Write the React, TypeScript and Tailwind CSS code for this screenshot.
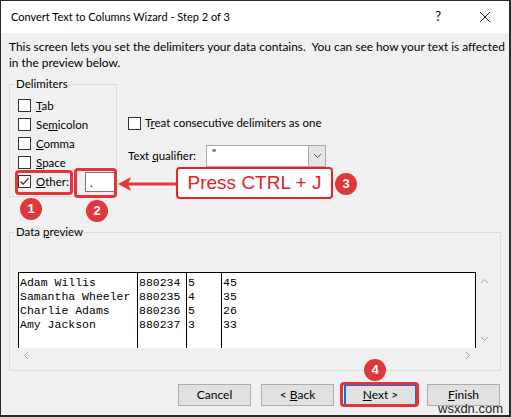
import React from "react";

const ui = { fontFamily: 'Lato, "Noto Sans", sans-serif' };
const mono = { fontFamily: '"Liberation Mono", "Courier New", monospace' };

const Box = ({ checked }: { checked?: boolean }) => (
  <span className="w-[13px] h-[13px] border border-[#333] bg-white flex items-center justify-center shrink-0">
    {checked && (
      <svg width="11" height="11" viewBox="0 0 11 11">
        <path d="M1.5 5.5 L4.2 8.2 L9.5 2.2" fill="none" stroke="#222" strokeWidth="1.1" />
      </svg>
    )}
  </span>
);

const Badge = ({ n, className }: { n: number; className: string }) => (
  <div
    className={`absolute w-[22px] h-[22px] rounded-full bg-[#e0373b] text-white text-[13px] font-bold flex items-center justify-center ${className}`}
    style={{ fontFamily: '"Liberation Sans", Arial, sans-serif' }}
  >
    {n}
  </div>
);

const rows = [
  ["Adam Willis", "880234", "5", "45"],
  ["Samantha Wheeler", "880235", "4", "35"],
  ["Charlie Adams", "880236", "5", "26"],
  ["Amy Jackson", "880237", "3", "33"],
];

const Btn = ({ children, active }: { children: React.ReactNode; active?: boolean }) => (
  <div
    className={`w-[73px] h-[22px] flex items-center justify-center text-[12px] text-black bg-[#e1e1e1] ${
      active ? "border-2 border-[#0078d7]" : "border border-[#adadad]"
    }`}
  >
    <span>{children}</span>
  </div>
);

export default function App() {
  const delims: React.ReactNode[] = [
    <><u>T</u>ab</>,
    <>Se<u>m</u>icolon</>,
    <><u>C</u>omma</>,
    <><u>S</u>pace</>,
  ];
  return (
    <div
      className="relative w-[511px] h-[417px] bg-[#f0f0f0] border-t border-l border-r-2 border-b-2 border-[#2a2a2a] flex flex-col overflow-hidden text-black"
      style={ui}
    >
      <div className="h-[32px] bg-white flex items-center pl-[10px] text-[11px] shrink-0">
        <span>Convert Text to Columns Wizard - Step 2 of 3</span>
        <span className="ml-auto mr-[38px] text-[13px]">?</span>
        <svg width="12" height="12" viewBox="0 0 12 12" className="mr-[18px]">
          <path d="M1 1 L11 11 M11 1 L1 11" stroke="#222" strokeWidth="1" />
        </svg>
      </div>

      <div className="flex flex-col px-[8px] pt-[6px] text-[11.5px]">
        <p className="leading-[16px] whitespace-nowrap text-[11.9px]">
          This screen lets you set the delimiters your data contains.&nbsp; You can see how your text is affected
          <br />
          in the preview below.
        </p>

        <div className="flex mt-[6px]">
          <fieldset className="w-[108px] h-[120px] border border-[#dcdcdc]">
            <legend className="ml-[5px] px-px leading-[14px]">Delimiters</legend>
            <div className="flex flex-col pl-[8px] pt-[5px]">
              {delims.map((label, i) => (
                <div key={i} className="h-[19px] flex items-center gap-[5px]">
                  <Box />
                  <span>{label}</span>
                </div>
              ))}
              <div className="h-[19px] flex items-center gap-[5px]">
                <Box checked />
                <span>
                  <u>O</u>ther:
                </span>
                <div className="ml-[11px] w-[31px] h-[20px] bg-white border border-[#7a7a7a] relative shrink-0">
                  <span className="absolute left-[4px] top-[5px] leading-[10px]">.</span>
                </div>
              </div>
            </div>
          </fieldset>

          <div className="flex flex-col ml-[11px] pt-[39px]">
            <div className="h-[14px] flex items-center gap-[4px]">
              <Box />
              <span>
                T<u>r</u>eat consecutive delimiters as one
              </span>
            </div>
            <div className="flex items-center mt-[15px]">
              <span className="w-[78px]">
                Text <u>q</u>ualifier:
              </span>
              <div className="w-[120px] h-[22px] flex border border-[#a8a8a8] bg-white">
                <span className="flex-1 pl-[5px] leading-[14px] text-[11px]">"</span>
                <div className="w-[17px] bg-[#e5e5e5] border-l border-[#a8a8a8] flex items-center justify-center">
                  <svg width="9" height="6" viewBox="0 0 9 6">
                    <path d="M1 1 L4.5 4.5 L8 1" fill="none" stroke="#555" strokeWidth="1" />
                  </svg>
                </div>
              </div>
            </div>
          </div>
        </div>

        <fieldset className="mt-[28px] w-[492px] h-[146px] border border-[#dcdcdc]">
          <legend className="ml-[5px] px-px leading-[14px]">
            Data <u>p</u>review
          </legend>
          <div className="mt-[33px] ml-[8px] w-[475px] h-[90px] flex flex-col">
            <div className="flex h-[76px]">
              <div className="flex-1 bg-white border-t border-r border-black flex" style={mono}>
                {[0, 1, 2, 3].map((c) => (
                  <div
                    key={c}
                    className={`border-l border-black pt-[3px] pl-px text-[11.5px] leading-[14px] ${
                      c === 0 ? "w-[119px]" : c === 1 ? "w-[49px]" : c === 2 ? "w-[35px]" : "flex-1"
                    }`}
                  >
                    {rows.map((r, i) => (
                      <div key={i} className="whitespace-pre">
                        {r[c]}
                      </div>
                    ))}
                  </div>
                ))}
              </div>
              <div className="w-[17px] flex flex-col items-center justify-between py-[6px]">
                <svg width="9" height="6" viewBox="0 0 9 6">
                  <path d="M1 5 L4.5 1.5 L8 5" fill="none" stroke="#a6a6a6" strokeWidth="1" />
                </svg>
                <svg width="9" height="6" viewBox="0 0 9 6">
                  <path d="M1 1 L4.5 4.5 L8 1" fill="none" stroke="#a6a6a6" strokeWidth="1" />
                </svg>
              </div>
            </div>
            <div className="h-[14px] flex items-center justify-between pl-[5px] pr-[22px]">
              <svg width="6" height="9" viewBox="0 0 6 9">
                <path d="M5 1 L1.5 4.5 L5 8" fill="none" stroke="#a6a6a6" strokeWidth="1" />
              </svg>
              <svg width="6" height="9" viewBox="0 0 6 9">
                <path d="M1 1 L4.5 4.5 L1 8" fill="none" stroke="#a6a6a6" strokeWidth="1" />
              </svg>
            </div>
          </div>
        </fieldset>

        <div className="flex justify-end gap-[10px] mt-[13px] pr-[1px]">
          <Btn>Cancel</Btn>
          <Btn>
            &lt; <u>B</u>ack
          </Btn>
          <Btn active>
            <u>N</u>ext &gt;
          </Btn>
          <Btn>
            <u>F</u>inish
          </Btn>
        </div>
      </div>

      {/* annotations */}
      <div className="absolute left-[14px] top-[169px] w-[58px] h-[25px] border-[3px] border-[#e8323a] rounded-[4px]" />
      <div className="absolute left-[73px] top-[167px] w-[43px] h-[30px] border-[3px] border-[#e8323a] rounded-[4px]" />
      <svg className="absolute left-[115px] top-[173px]" width="64" height="20" viewBox="0 0 64 20">
        <path d="M12 10 L64 10" stroke="#e8323a" strokeWidth="3" />
        <path d="M2 10 L15 3 L12 10 L15 17 Z" fill="#e8323a" />
      </svg>
      <div
        className="absolute left-[175px] top-[166px] w-[157px] h-[32px] bg-white border-2 border-[#e8202a] rounded-[4px] flex items-center justify-center text-[19px] text-[#e8202a]"
        style={{ fontFamily: '"Liberation Sans", Arial, sans-serif' }}
      >
        Press CTRL + J
      </div>
      <Badge n={1} className="left-[19px] top-[197px]" />
      <Badge n={2} className="left-[85px] top-[199px]" />
      <Badge n={3} className="left-[334px] top-[172px]" />
      <Badge n={4} className="left-[363px] top-[358px]" />
      <div className="absolute left-[339px] top-[381px] w-[79px] h-[25px] border-[3px] border-[#e8323a] rounded-[4px]" />
      <div
        className="absolute left-[437px] top-[400px] text-[13px] leading-[15px] text-[#222]"
        style={{ fontFamily: '"Liberation Sans", Arial, sans-serif' }}
      >
        wsxdn.com
      </div>
    </div>
  );
}
